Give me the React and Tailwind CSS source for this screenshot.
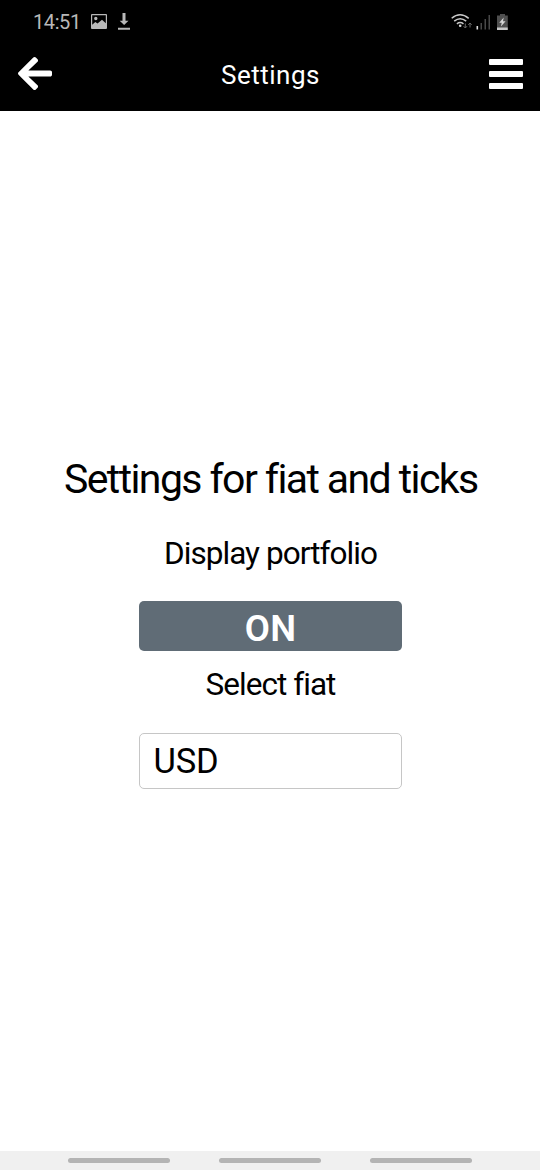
import { FaArrowLeft } from "react-icons/fa";

function StatusBar() {
  return (
    <div className="flex h-11 items-center justify-between pl-[33px] pr-[31px] text-[#b8b8b8]">
      <div className="flex items-center">
        <span className="w-[58px] whitespace-nowrap text-[20px] leading-6 tracking-[-0.400px]">14:51</span>
        <svg className="mb-px h-[15px] w-4" viewBox="0 0 16 15" fill="currentColor">
          <path fillRule="evenodd" d="M1 0h14a1 1 0 0 1 1 1v13a1 1 0 0 1-1 1H1a1 1 0 0 1-1-1V1a1 1 0 0 1 1-1zM1.2 1.2v9.600l3.100-2.800 2.200 1.400 4.500-3.600 3.800 3.400V1.200zM4.800 2.800a1.700 1.700 0 1 1 0 3.400A1.700 1.700 0 0 1 4.800 2.800z" />
        </svg>
        <svg className="mb-px ml-[11px] h-[17px] w-3" viewBox="0 0 12 17" fill="currentColor">
          <path d="M4.500 0h3v7.700h3L6.100 12 1.700 7.700h2.800zM0 14.800h12v2H0z" />
        </svg>
      </div>
      <svg className="mb-px h-[17px] w-[58px]" viewBox="451 12 58 17" fill="none">
        <g stroke="#c8c8c8" strokeWidth="1.500">
          <path d="M451.700 17.300q8.300-7 17 0" />
          <path d="M454.200 20.200q6-5 12 0" />
          <path d="M456.900 22.900q3.200-2.600 6.600 0" />
        </g>
        <circle cx="460.200" cy="24.700" r="1.300" fill="#d8d8d8" />
        <path d="M465.300 22.500v4.500m-1.700-1.800 1.700 1.800 1.700-1.800M470 26.500V22m-1.700 1.800L470 22l1.700 1.800" stroke="#6a6a6a" strokeWidth="1" />
        <path d="M477.300 25v3.500" stroke="#e0e0e0" strokeWidth="1.600" />
        <path d="M481.200 22v6.500M485.200 18v10.500M489.200 14v14.500" stroke="#5a5a5a" strokeWidth="1.200" />
        <path d="M500 13h5v1.500h2.800V26H497V14.500h3z" fill="#4f4f4f" />
        <path d="M497 26.300h10.800V29H497z" fill="#c8c8c8" />
        <path d="m503.700 16.500-4.500 5.300h2.500l-.8 3.700 4.700-5.300H503z" fill="#d8d8d8" />
      </svg>
    </div>
  );
}

function Header() {
  return (
    <header className="h-[111px] shrink-0 bg-black">
      <StatusBar />
      <div className="flex h-[59px] items-center justify-between pl-[18px] pr-[17px] text-white">
        <button type="button" aria-label="Back" className="flex w-[34px]">
          <FaArrowLeft className="h-[39px] w-[34px]" />
        </button>
        <h1 className="pt-0.5 text-[26px] leading-8 tracking-[0.5px]">Settings</h1>
        <button type="button" aria-label="Menu" className="flex w-[34px] flex-col gap-1.5">
          <span className="h-1.5 rounded-[1px] bg-white" />
          <span className="h-1.5 rounded-[1px] bg-white" />
          <span className="h-1.5 rounded-[1px] bg-white" />
        </button>
      </div>
    </header>
  );
}

function NavigationBar() {
  return (
    <nav className="flex h-[19px] shrink-0 items-center justify-center gap-[49px] bg-[#f0f0f0] pb-px">
      <span className="h-[5px] w-[102px] rounded-full bg-[#b4b4b4]" />
      <span className="h-[5px] w-[102px] rounded-full bg-[#b4b4b4]" />
      <span className="h-[5px] w-[102px] rounded-full bg-[#b4b4b4]" />
    </nav>
  );
}

export default function App() {
  return (
    <div className="flex h-[1170px] w-[540px] flex-col overflow-hidden bg-white font-['Roboto',sans-serif] text-black">
      <Header />
      <main className="flex flex-1 flex-col items-center pt-[344px]">
        <h2 className="whitespace-nowrap pl-[1.500px] text-[41px] leading-[48px] tracking-[-1.600px]">Settings for fiat and ticks</h2>
        <p className="mt-[31px] whitespace-nowrap pl-px text-[31.500px] leading-10 tracking-[-0.950px]">Display portfolio</p>
        <button type="button" className="mt-[26.500px] flex h-[50px] w-[263px] items-center justify-center rounded-[5px] bg-[#606c76] pl-px pt-[7px] text-[36.500px] font-semibold leading-none tracking-[0.300px] text-white">ON</button>
        <p className="mt-3.5 whitespace-nowrap pl-px text-[31.500px] leading-10 tracking-[-0.950px]">Select fiat</p>
        <div className="mt-7 flex h-[56.500px] w-[263px] items-center rounded-[5px] border-[1.500px] border-[#c6c6c6] pl-3.5 text-[34.500px] leading-none tracking-[-0.200px]">USD</div>
      </main>
      <NavigationBar />
    </div>
  );
}
